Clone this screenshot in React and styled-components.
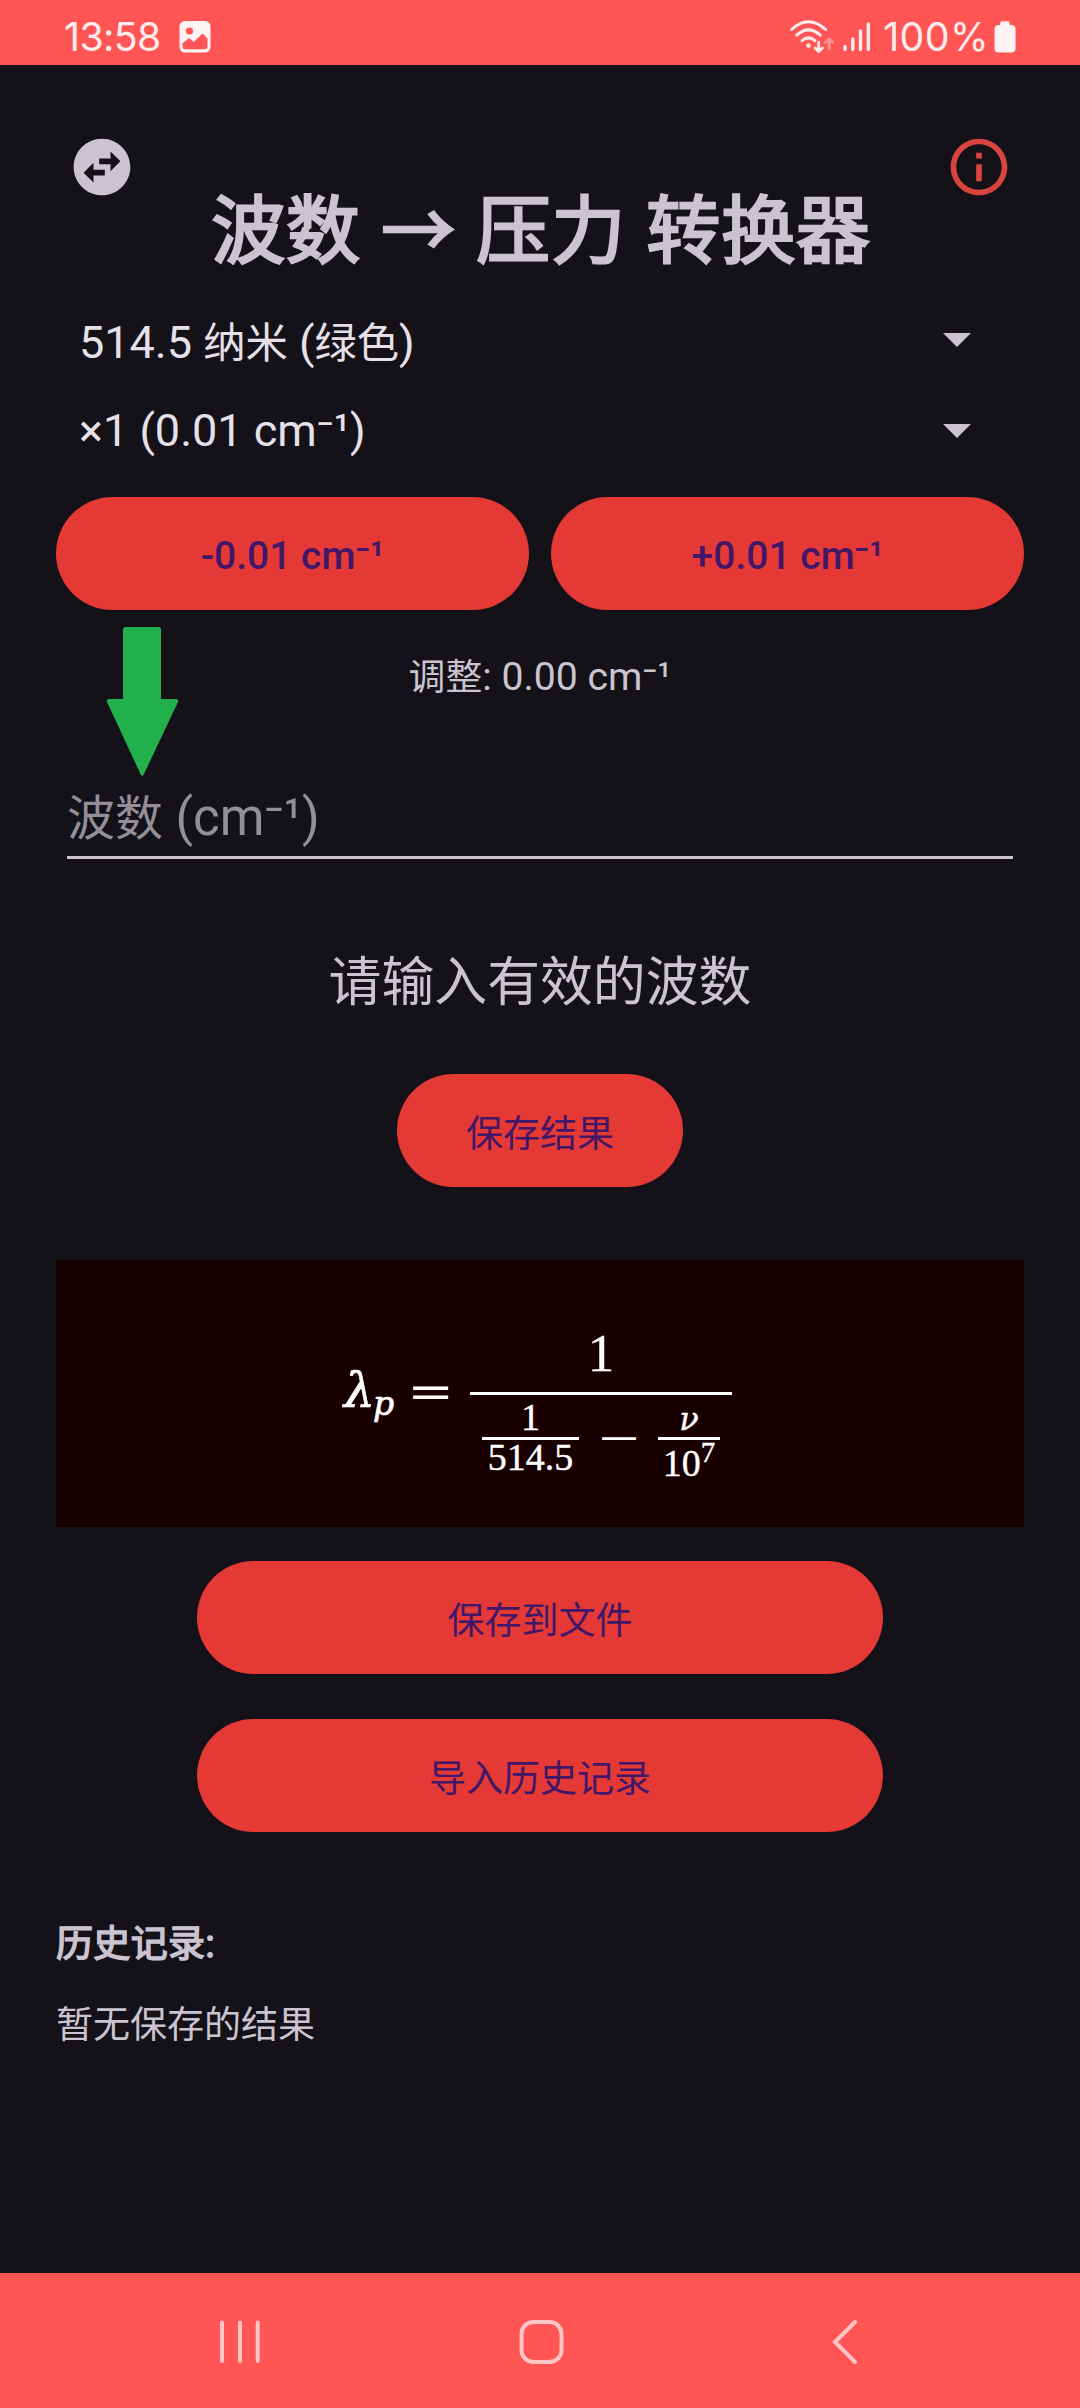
import React from "react";
import styled, { createGlobalStyle } from "styled-components";

const GlobalStyle = createGlobalStyle`
  * { box-sizing: border-box; }
  body { margin: 0; background: #141118; }
`;

const Screen = styled.div`
  position: relative;
  width: 1080px;
  height: 2408px;
  display: flex;
  flex-direction: column;
  background: #141118;
  color: #cac4d0;
  font-family: Roboto, "Noto Sans CJK SC", sans-serif;
`;

const StatusBar = styled.header`
  height: 65px;
  flex: none;
  display: flex;
  align-items: center;
  justify-content: space-between;
  padding: 8px 64px 0 64px;
  background: #ff5555;
  color: #ffecec;
`;

const StatusGroup = styled.div`
  display: flex;
  align-items: center;
  gap: ${(p) => p.$gap}px;
`;

const StatusText = styled.span`
  font-family: Inter, Roboto, sans-serif;
  font-size: 39.3px;
  line-height: 48px;
  letter-spacing: ${(p) => p.$tracking || 0}px;
  margin-left: ${(p) => p.$left || 0}px;
  margin-right: ${(p) => p.$right || 0}px;
`;

const Content = styled.main`
  flex: 1;
  display: flex;
  flex-direction: column;
  padding: 68px 56px 0;
`;

const Toolbar = styled.div`
  display: flex;
  justify-content: space-between;
  padding: 0 11px 0 12px;
  height: 68px;
`;

const Han = styled.span`
  font-family: "Noto Sans CJK SC", sans-serif;
  font-size: 0.94em;
  line-height: 0;
`;

const Title = styled.h1`
  margin: -20px 0 0;
  padding-left: 2px;
  font-size: 78.75px;
  line-height: 98px;
  font-weight: 400;
  letter-spacing: 0.8px;
  -webkit-text-stroke: 2.6px #cac4d0;
  text-align: center;
  white-space: nowrap;
`;

const Spinner = styled.div`
  height: 91px;
  display: flex;
  align-items: center;
  justify-content: space-between;
  padding: 0 53px 0 23px;
  margin-top: ${(p) => p.$top || 0}px;
  color: #e6e0e9;
  font-size: 45px;
  line-height: 60px;
`;

const SpinnerLabel = styled.span`
  padding-top: ${(p) => p.$drop || 0}px;
`;

const ButtonRow = styled.div`
  display: grid;
  grid-template-columns: 1fr 1fr;
  gap: 22px;
  margin-top: 21px;
`;

const Button = styled.button`
  height: 113px;
  width: ${(p) => p.$width || "auto"};
  align-self: center;
  margin: ${(p) => p.$top || 0}px 0 0;
  padding: ${(p) => p.$drop || 4}px 0 0;
  border: 0;
  border-radius: 57px;
  background: #e53935;
  color: #431768;
  font-family: Roboto, sans-serif;
  font-size: ${(p) => p.$size || 39.4}px;
  font-weight: ${(p) => p.$weight || 400};
  line-height: 60px;
`;

const Adjustment = styled.p`
  margin: 37px 0 0;
  font-size: 39.2px;
  line-height: 60px;
  text-align: center;
`;

const Field = styled.div`
  margin: 80px 11px 0;
  padding-top: 1px;
  height: 72px;
  border-bottom: 3px solid #cac4d0;
  color: #938f99;
  font-size: 51px;
  line-height: 60px;
`;

const Result = styled.p`
  margin: 93px 0 0;
  font-size: 56.25px;
  line-height: 60px;
  text-align: center;
`;

const FormulaCard = styled.section`
  margin-top: 73px;
  height: 267px;
  display: flex;
  justify-content: center;
  padding-right: 4px;
  background: #190000;
  color: #fff;
  font-family: "Liberation Serif", serif;
  -webkit-text-stroke: 0.4px #fff;
`;

const Lambda = styled.i`
  width: 66px;
  margin-top: 101px;
  font-family: "DejaVu Serif", serif;
  font-size: 49px;
  line-height: 60px;
  white-space: nowrap;
  -webkit-text-stroke: 0.7px #fff;
`;

const Subscript = styled.i`
  display: inline-block;
  font-size: 33px;
  line-height: 0;
  transform: translate(-2px, 8px);
`;

const Operator = styled.span`
  font-family: "DejaVu Serif", serif;
  font-size: ${(p) => p.$size}px;
  line-height: 60px;
  width: ${(p) => p.$width}px;
  margin-top: ${(p) => p.$top}px;
  padding-right: ${(p) => p.$right || 0}px;
  text-align: center;
  -webkit-text-stroke: 0;
`;

const Glyph = styled.span`
  display: inline-block;
  transform: scale(${(p) => p.$x}, ${(p) => p.$y});
`;

const Fraction = styled.div`
  width: ${(p) => p.$width}px;
  margin-top: ${(p) => p.$top || 0}px;
  display: flex;
  flex-direction: column;
`;

const Rule = styled.div`
  height: 3px;
  background: #fff;
  margin-top: ${(p) => p.$top || 0}px;
`;

const Term = styled.div`
  font-size: ${(p) => p.$size || 38}px;
  line-height: ${(p) => p.$line || 39}px;
  margin-top: ${(p) => p.$top || 0}px;
  text-align: center;
  white-space: nowrap;
`;

const Nu = styled.i`
  font-family: "DejaVu Serif", serif;
  font-size: 32px;
  line-height: 0;
`;

const Denominator = styled.div`
  display: flex;
  align-items: flex-start;
  padding: 3px 12px 0;
`;

const Exponent = styled.span`
  display: inline-block;
  font-size: 29px;
  line-height: 0;
  transform: translateY(-14px);
`;

const HistoryTitle = styled.h2`
  margin: 82px 0 0;
  font-size: 39.4px;
  line-height: 60px;
  font-weight: 400;
  letter-spacing: 0.3px;
  -webkit-text-stroke: 1.5px #cac4d0;
`;

const HistoryEmpty = styled.p`
  margin: 21px 0 0;
  font-size: 39.4px;
  line-height: 60px;
`;

const NavBar = styled.nav`
  height: 135px;
  flex: none;
  display: grid;
  grid-template-columns: 60px 60px 60px;
  column-gap: 242px;
  padding: 39px 0 0 210px;
  background: #ff5555;
`;

const PointerArrow = styled.svg`
  position: absolute;
  left: 106px;
  top: 626px;
`;

const ImageIcon = () => (
  <svg width="32" height="32" viewBox="0 0 32 32">
    <rect x="0.5" y="0" width="31" height="31.5" rx="5.5" fill="#fff2f2" />
    <circle cx="10.5" cy="10" r="3.6" fill="#ff5555" />
    <path d="M3.5 22.5 10 17l4.7 4L23.5 12.500l5 5V25.500Q28.500 28.300 25.500 28.300H6.500Q3.500 28.300 3.500 25.500Z" fill="#ff5555" />
  </svg>
);

const WifiIcon = () => (
  <svg width="46" height="36" viewBox="0 0 46 36" fill="none" stroke="#ffecec" strokeLinecap="round">
    <path d="M2.500 10.500Q19.500 -5 36.500 10.500" strokeWidth="3" />
    <path d="M7.700 16.200Q19.500 5.500 31.300 16.200" strokeWidth="3" />
    <path d="M13.200 21.700Q19.500 16 26 21.700" strokeWidth="3" />
    <circle cx="19.500" cy="26.500" r="2.300" fill="#ffecec" stroke="none" />
    <path d="M29.700 23.500V32M26 29l3.700 3.500L33.400 29" strokeWidth="2.800" />
    <path d="M40.200 30V20.500M36.500 23.500l3.700-3.500 3.700 3.500" strokeWidth="2.800" opacity="0.400" />
  </svg>
);

const SignalIcon = () => (
  <svg width="28" height="32" viewBox="0 0 28 32" stroke="#ffecec" strokeWidth="3.400" strokeLinecap="round">
    <path d="M2 25.500V28.500M9.800 18V28.500M17.500 10V28.500M25.300 3V28.500" />
  </svg>
);

const BatteryIcon = () => (
  <svg width="22" height="32" viewBox="0 0 22 32" fill="#fff2f2">
    <rect x="6.300" y="0.300" width="9.400" height="7" rx="1.500" />
    <rect x="0.500" y="4" width="21" height="27.500" rx="4" />
  </svg>
);

const SwapIcon = () => (
  <svg width="68" height="68" viewBox="0 0 24 24" fill="#cac4d0">
    <path d="M22 12c0-5.520-4.480-10-10-10S2 6.480 2 12s4.480 10 10 10 10-4.480 10-10zm-7-5.500l3.500 3.500-3.500 3.500V11h-4V9h4V6.500zm-6 11L5.500 14 9 10.500V13h4v2H9v2.500z" />
  </svg>
);

const InfoIcon = () => (
  <svg width="68" height="68" viewBox="0 0 24 24" fill="#d94340">
    <path d="M11 7h2v2h-2zm0 4h2v6h-2zm1-9C6.480 2 2 6.480 2 12s4.480 10 10 10 10-4.480 10-10S17.520 2 12 2zm0 18c-4.410 0-8-3.590-8-8s3.590-8 8-8 8 3.590 8 8-3.590 8-8 8z" />
  </svg>
);

const CaretIcon = () => (
  <svg width="28" height="14" viewBox="0 0 28 14" fill="#cac4d0">
    <path d="M0 0H28L14 14Z" />
  </svg>
);

export default function App() {
  return (
    <>
      <GlobalStyle />
      <Screen>
        <StatusBar>
          <StatusGroup $gap={18}>
            <StatusText $tracking={-0.6}>13:58</StatusText>
            <ImageIcon />
          </StatusGroup>
          <StatusGroup $gap={8}>
            <WifiIcon />
            <SignalIcon />
            <StatusText $left={4} $right={-3} $tracking={0.4}>100%</StatusText>
            <BatteryIcon />
          </StatusGroup>
        </StatusBar>

        <Content>
          <Toolbar>
            <SwapIcon />
            <InfoIcon />
          </Toolbar>
          <Title>
            <Han>波数</Han> <Han>→</Han> <Han>压力</Han> <Han>转换器</Han>
          </Title>
          <Spinner $top={15}>
            <SpinnerLabel $drop={7}>
              514.5 <Han>纳米</Han> (<Han>绿色</Han>)
            </SpinnerLabel>
            <CaretIcon />
          </Spinner>
          <Spinner>
            <SpinnerLabel>×1 (0.01 cm⁻¹)</SpinnerLabel>
            <CaretIcon />
          </Spinner>
          <ButtonRow>
            <Button $width="100%" $weight={500} $size={39}>-0.01 cm⁻¹</Button>
            <Button $width="100%" $weight={500} $size={39}>+0.01 cm⁻¹</Button>
          </ButtonRow>
          <Adjustment>
            <Han>调整</Han>: 0.00 cm⁻¹
          </Adjustment>
          <Field>
            <Han>波数</Han> (cm⁻¹)
          </Field>
          <Result>
            <Han>请输入有效的波数</Han>
          </Result>
          <Button $width="286px" $top={62} $drop={6}>
            <Han>保存结果</Han>
          </Button>
          <FormulaCard>
            <Lambda>
              λ<Subscript>p</Subscript>
            </Lambda>
            <Operator $size={49} $width={60} $top={103} $right={24}>
              <Glyph $x={1.14} $y={0.9}>=</Glyph>
            </Operator>
            <Fraction $width={262} $top={63}>
              <Term $size={53} $line={60}>1</Term>
              <Rule $top={9} />
              <Denominator>
                <Fraction $width={97}>
                  <Term>1</Term>
                  <Rule />
                  <Term $top={-3} $line={40}>514.5</Term>
                </Fraction>
                <Operator $size={45} $width={79} $top={10}>
                  <Glyph $x={1.2} $y={0.8}>−</Glyph>
                </Operator>
                <Fraction $width={62}>
                  <Term><Nu>ν</Nu></Term>
                  <Rule />
                  <Term $top={3} $line={40}>
                    10<Exponent>7</Exponent>
                  </Term>
                </Fraction>
              </Denominator>
            </Fraction>
          </FormulaCard>
          <Button $width="686px" $top={34} $drop={6}>
            <Han>保存到文件</Han>
          </Button>
          <Button $width="686px" $top={45} $drop={6}>
            <Han>导入历史记录</Han>
          </Button>
          <HistoryTitle>
            <Han>历史记录</Han>:
          </HistoryTitle>
          <HistoryEmpty>
            <Han>暂无保存的结果</Han>
          </HistoryEmpty>
        </Content>

        <NavBar>
          <svg width="60" height="60" viewBox="0 0 60 60" stroke="#ffc4c4" strokeWidth="4" strokeLinecap="round">
            <path d="M12 10.500V49M30 10.500V49M47.700 10.500V49" />
          </svg>
          <svg width="60" height="60" viewBox="0 0 60 60" fill="none" stroke="#ffc4c4" strokeWidth="4">
            <rect x="9.500" y="10" width="40" height="40" rx="12" />
          </svg>
          <svg width="60" height="60" viewBox="0 0 60 60" fill="none" stroke="#ffc4c4" strokeWidth="4" strokeLinecap="round">
            <path d="M41 10 21 30 41 50" />
          </svg>
        </NavBar>

        <PointerArrow width="73" height="151" viewBox="0 0 73 151">
          <path d="M18.500 1H53.500L55 3V73H70.500Q72.500 73.500 72 76L37.500 149Q36.500 150.500 35 149L1 76Q0.500 73.500 2.500 73H17V3Z" fill="#22b14c" />
        </PointerArrow>
      </Screen>
    </>
  );
}
